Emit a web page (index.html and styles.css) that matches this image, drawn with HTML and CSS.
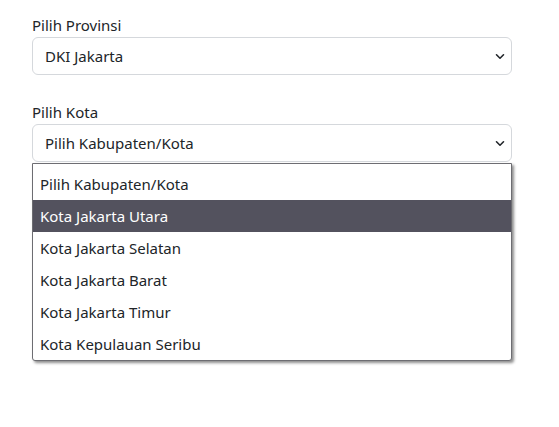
FILE: index.html
```html
<!DOCTYPE html>
<html lang="en">
<head>
    <meta charset="UTF-8">
    <meta name="viewport" content="width=device-width, initial-scale=1.0">
    <title>Pilih Wilayah</title>
    <link rel="stylesheet" href="styles.css">
</head>
<body>
    <div class="container">
        <div class="field">
            <label class="form-label">Pilih Provinsi</label>
            <div class="form-select">
                <span>DKI Jakarta</span>
                <svg class="chevron" width="10" height="7" viewBox="0 0 10 7"><path d="M1.5 1.8 5 5.2l3.5-3.4" fill="none" stroke="#212529" stroke-width="1.6" stroke-linecap="round" stroke-linejoin="round"/></svg>
            </div>
        </div>

        <div class="field">
            <label class="form-label">Pilih Kota</label>
            <div class="form-select">
                <span>Pilih Kabupaten/Kota</span>
                <svg class="chevron" width="10" height="7" viewBox="0 0 10 7"><path d="M1.5 1.8 5 5.2l3.5-3.4" fill="none" stroke="#212529" stroke-width="1.6" stroke-linecap="round" stroke-linejoin="round"/></svg>
            </div>
            <ul class="dropdown">
                <li>Pilih Kabupaten/Kota</li>
                <li class="active">Kota Jakarta Utara</li>
                <li>Kota Jakarta Selatan</li>
                <li>Kota Jakarta Barat</li>
                <li>Kota Jakarta Timur</li>
                <li>Kota Kepulauan Seribu</li>
            </ul>
        </div>
    </div>
</body>
</html>
```

FILE: styles.css
```css
body {
    margin: 0;
    background-color: #ffffff;
    font-family: 'Noto Sans', 'Open Sans', sans-serif;
    font-size: 15px;
    color: #212529;
}

.container {
    width: 480px;
    padding: 13px 0 0 32px;
}

.field {
    margin-bottom: 25px;
}

.form-label {
    display: block;
    line-height: 24px;
}

.form-select {
    display: flex;
    align-items: center;
    justify-content: space-between;
    height: 36px;
    padding: 0 6px 0 12px;
    border: 1px solid #d5d8dc;
    border-radius: 6px;
    line-height: 24px;
}

.chevron {
    margin-top: 1px;
}

.dropdown {
    width: 478px;
    margin: 1px 0 0;
    padding: 4px 0 0;
    list-style: none;
    background-color: #ffffff;
    border: 1px solid #6d6d72;
    border-radius: 0 0 3px 3px;
    box-shadow: 2px 2px 3px rgba(0, 0, 0, 0.45);
}

    .dropdown li {
        height: 32px;
        line-height: 32px;
        padding-left: 7px;
    }

    .dropdown li.active {
        background-color: #53525e;
        color: #ffffff;
    }
```
